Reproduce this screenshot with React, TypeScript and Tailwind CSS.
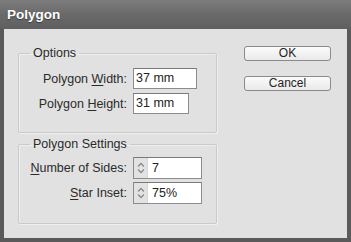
import React from "react";

const font = { fontFamily: '"Liberation Sans", Arial, sans-serif' };

function Spin() {
  return (
    <div className="flex flex-col items-center justify-center gap-[2px] w-[14px] h-full bg-[#e2e2e2] border-r border-[#d6d6d6]">
      <svg width="8" height="5" viewBox="0 0 8 5">
        <path d="M1 4.5 L4 1.5 L7 4.5" fill="none" stroke="#8a8a8a" strokeWidth="1.3" />
      </svg>
      <svg width="8" height="5" viewBox="0 0 8 5">
        <path d="M1 0.5 L4 3.5 L7 0.5" fill="none" stroke="#8a8a8a" strokeWidth="1.3" />
      </svg>
    </div>
  );
}

function Field({
  label,
  u,
  rest,
  value,
  w,
  h,
  spin,
}: {
  label: string;
  u: string;
  rest: string;
  value: string;
  w: string;
  h: string;
  spin?: boolean;
}) {
  return (
    <div className="flex items-center">
      <div className="w-[97px] text-right text-[#2a2a2a] text-[12.5px] leading-[14px]">
        {label}
        <span className="underline underline-offset-2">{u}</span>
        {rest}
      </div>
      <div
        className={`ml-[6px] ${w} ${h} bg-white border border-[#8c8c8c] border-t-[#7a7a7a] flex items-center text-[12.5px] text-[#222]`}
      >
        {spin ? (
          <>
            <Spin />
            <span className="ml-[4px]">{value}</span>
          </>
        ) : (
          <span className="ml-[2px]">{value}</span>
        )}
      </div>
    </div>
  );
}

function Group({ title, children, rowsClass }: { title: string; children: React.ReactNode; rowsClass: string }) {
  return (
    <fieldset className="border border-[#cacaca] rounded-[2px] pl-[11px] pr-0 shadow-[inset_1px_1px_0_#efefef,1px_1px_0_#efefef]">
      <legend className="px-[3px] text-[12.5px] leading-[14px] text-[#2a2a2a]">{title}</legend>
      <div className={rowsClass}>{children}</div>
    </fieldset>
  );
}

function Btn({ children }: { children: React.ReactNode }) {
  return (
    <button className="w-[87px] h-[15px] flex items-center justify-center rounded-[3px] border border-[#8a8a8a] bg-linear-to-b from-[#fbfbfb] to-[#e9e9e9] text-[12px] leading-[13px] text-[#222]">
      {children}
    </button>
  );
}

export default function App() {
  return (
    <div style={font} className="w-[351px] h-[242px] bg-[#5a5a5a] flex flex-col">
      {/* Title Bar */}
      <div className="h-[29px] shrink-0 px-[7px] flex items-center bg-linear-to-b from-[#7c7c7c] via-[#6a6a6a] to-[#5f5f5f]">
        <span className="text-white font-bold text-[13.5px] leading-[14px] mt-[1px] [text-shadow:0_1px_1px_#3a3a3a]">
          Polygon
        </span>
      </div>

      {/* Client */}
      <div className="flex-1 mx-[4px] mb-[4px] bg-[#e1e1e1] flex pl-[14px] pt-[17px]">
        <div className="w-[199px] flex flex-col gap-[4px]">
          <Group title="Options" rowsClass="mt-[8px] mb-[18px] flex flex-col gap-[4px]">
            <Field label="Polygon " u="W" rest="idth:" value="37 mm" w="w-[64px]" h="h-[21px]" />
            <Field label="Polygon " u="H" rest="eight:" value="31 mm" w="w-[56px]" h="h-[21px]" />
          </Group>
          <Group title="Polygon Settings" rowsClass="mt-[6px] mb-[19px] flex flex-col gap-[3px]">
            <Field label="" u="N" rest="umber of Sides:" value="7" w="w-[69px]" h="h-[22px]" spin />
            <Field label="" u="S" rest="tar Inset:" value="75%" w="w-[69px]" h="h-[22px]" spin />
          </Group>
        </div>

        <div className="ml-[27px] flex flex-col gap-[15px]">
          <Btn>OK</Btn>
          <Btn>Cancel</Btn>
        </div>
      </div>
    </div>
  );
}
